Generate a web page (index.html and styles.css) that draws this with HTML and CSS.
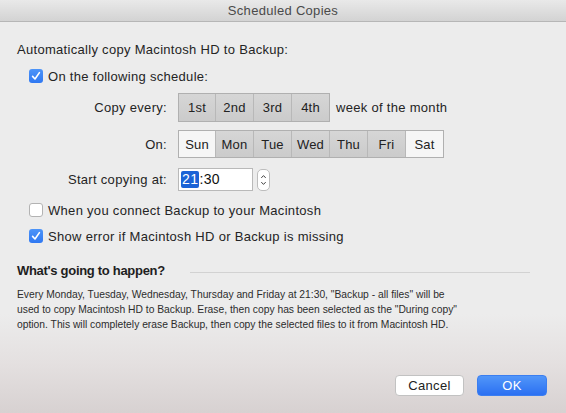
FILE: index.html
```html
<!DOCTYPE html>
<html>
<head>
<meta charset="utf-8">
<link rel="stylesheet" href="styles.css">
</head>
<body>
<div class="window">
  <div class="titlebar">Scheduled Copies</div>
  <div class="content">
    <div class="row intro">Automatically copy Macintosh HD to Backup:</div>
    <div class="row check-row first">
      <span class="cb checked"><svg viewBox="0 0 14 14" width="14" height="14"><path d="M3.6 7.4 L6 10 L10.4 3.6" fill="none" stroke="#fff" stroke-width="1.6" stroke-linecap="round" stroke-linejoin="round"/></svg></span>
      <span>On the following schedule:</span>
    </div>
    <div class="row form-row seg-row1">
      <span class="label">Copy every:</span>
      <div class="segs">
        <span class="seg on">1st</span><span class="seg on">2nd</span><span class="seg on">3rd</span><span class="seg on">4th</span>
      </div>
      <span class="after">week of the month</span>
    </div>
    <div class="row form-row seg-row2">
      <span class="label">On:</span>
      <div class="segs">
        <span class="seg">Sun</span><span class="seg on">Mon</span><span class="seg on">Tue</span><span class="seg on">Wed</span><span class="seg on">Thu</span><span class="seg on">Fri</span><span class="seg">Sat</span>
      </div>
    </div>
    <div class="row form-row time-row">
      <span class="label">Start copying at:</span>
      <div class="field"><span class="sel">21</span>:30</div>
      <div class="stepper"><svg viewBox="0 0 13 22" width="13" height="22"><path d="M4.2 8.2 L6.5 5.8 L8.8 8.2" fill="none" stroke="#333" stroke-width="1.1" stroke-linecap="round" stroke-linejoin="round"/><path d="M4.2 13.8 L6.5 16.2 L8.8 13.8" fill="none" stroke="#333" stroke-width="1.1" stroke-linecap="round" stroke-linejoin="round"/></svg></div>
    </div>
    <div class="row check-row second">
      <span class="cb"></span>
      <span>When you connect Backup to your Macintosh</span>
    </div>
    <div class="row check-row third">
      <span class="cb checked"><svg viewBox="0 0 14 14" width="14" height="14"><path d="M3.6 7.4 L6 10 L10.4 3.6" fill="none" stroke="#fff" stroke-width="1.6" stroke-linecap="round" stroke-linejoin="round"/></svg></span>
      <span>Show error if Macintosh HD or Backup is missing</span>
    </div>
    <div class="row section-head">
      <span class="head-text">What's going to happen?</span>
      <span class="head-line"></span>
    </div>
    <p class="desc">Every Monday, Tuesday, Wednesday, Thursday and Friday at 21:30, "Backup - all files" will be<br>used to copy Macintosh HD to Backup. Erase, then copy has been selected as the "During copy"<br>option. This will completely erase Backup, then copy the selected files to it from Macintosh HD.</p>
    <div class="footer">
      <button class="btn cancel">Cancel</button>
      <button class="btn ok">OK</button>
    </div>
  </div>
</div>
</body>
</html>
```

FILE: styles.css
```css
html, body {
  margin: 0;
  padding: 0;
}
body {
  width: 566px;
  height: 413px;
  overflow: hidden;
  font-family: "Liberation Sans", Arial, sans-serif;
  color: #242424;
}
.window {
  width: 566px;
  height: 413px;
  display: flex;
  flex-direction: column;
  background: linear-gradient(to bottom, #ececec 0%, #ececec 76%, #e4e0e0 88%, #d7d1d1 100%);
}
.titlebar {
  height: 21px;
  line-height: 22px;
  text-align: center;
  font-size: 13px;
  letter-spacing: 0.3px;
  color: #4a4a4a;
  background: linear-gradient(to bottom, #e9e9e9, #d3d3d3);
  border-bottom: 1px solid #b6b6b6;
}
.content {
  flex: 1;
  display: flex;
  flex-direction: column;
  padding: 0 19px 17px 17px;
}
.row {
  display: flex;
  align-items: center;
  font-size: 13px;
  letter-spacing: 0.3px;
}
.intro {
  height: 18px;
  margin-top: 18px;
}
.check-row {
  height: 18px;
  padding-left: 12px;
  gap: 5px;
}
.check-row.first { margin-top: 9px; }
.check-row.second { margin-top: 10px; }
.check-row.third { margin-top: 8px; }
.cb {
  width: 14px;
  height: 14px;
  box-sizing: border-box;
  border-radius: 3px;
  background: #fff;
  border: 1px solid #b3b3b3;
  display: inline-flex;
  flex: none;
}
.cb.checked {
  border: none;
  background: linear-gradient(to bottom, #4d94f8, #2f78f2);
}
.form-row {
  gap: 11px;
}
.label {
  width: 150px;
  text-align: right;
  flex: none;
}
.seg-row1 { margin-top: 8px; height: 29px; }
.seg-row2 { margin-top: 8px; height: 28px; }
.segs {
  display: flex;
  height: 100%;
  border: 1px solid #b0b0b0;
  box-sizing: border-box;
  letter-spacing: 0.2px;
}
.seg {
  width: 37px;
  display: flex;
  align-items: center;
  justify-content: center;
  background: #f6f6f6;
  border-left: 1px solid #b8b8b8;
  color: #222;
}
.seg:first-child { border-left: none; width: 36px; }
.seg.on {
  background: linear-gradient(to bottom, #d6d6d6, #cbcbcb);
}
.after {
  margin-left: -5px;
}
.time-row {
  margin-top: 10px;
  height: 23px;
}
.field {
  width: 75px;
  height: 23px;
  box-sizing: border-box;
  border: 1px solid #b9b9b9;
  background: #fff;
  font-size: 14px;
  line-height: 21px;
  padding-left: 2px;
  letter-spacing: 0.4px;
  color: #111;
}
.sel {
  background: #1b63d6;
  color: #fff;
  display: inline-block;
  line-height: 17px;
  padding: 0 1px;
  border-radius: 2px;
}
.stepper {
  margin-left: -7px;
  width: 13px;
  height: 22px;
  box-sizing: border-box;
  border: 1px solid #bdbdbd;
  border-radius: 5px;
  background: #fff;
  display: flex;
  align-items: center;
  justify-content: center;
  overflow: hidden;
}
.section-head {
  margin-top: 16px;
  height: 18px;
}
.head-text {
  font-weight: bold;
  letter-spacing: -0.3px;
  color: #1e1e1e;
}
.head-line {
  flex: 1;
  height: 1px;
  background: #d2d2d2;
  margin-left: 25px;
  margin-right: 17px;
  margin-top: 4px;
}
.desc {
  margin: 8px 0 0 0;
  font-size: 10.3px;
  line-height: 15px;
  color: #2c2c2c;
  white-space: nowrap;
}
.footer {
  margin-top: auto;
  display: flex;
  justify-content: flex-end;
  gap: 13px;
}
.btn {
  height: 21px;
  width: 69px;
  border-radius: 4px;
  font-family: "Liberation Sans", Arial, sans-serif;
  font-size: 13px;
  letter-spacing: 0.3px;
  padding: 0;
  box-sizing: border-box;
}
.cancel {
  background: #fff;
  border: 1px solid #c2c2c2;
  color: #222;
}
.ok {
  width: 70px;
  border: 1px solid #3b7ef0;
  background: linear-gradient(to bottom, #5196f9, #2b70f2);
  color: #fff;
}
```
